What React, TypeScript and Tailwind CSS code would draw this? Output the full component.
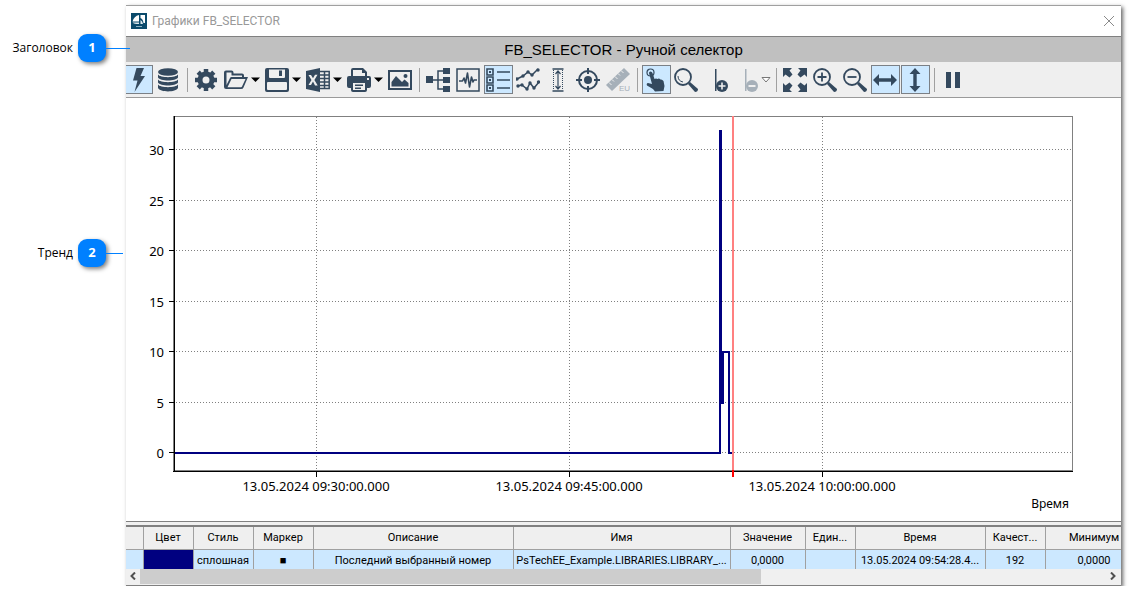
import React from 'react';
import clsx from 'clsx';

const DARK = '#34495e';
const MUTED = '#a6b0b9';

function Icon({ children, muted = false }: { children: React.ReactNode; muted?: boolean }) {
  const color = muted ? MUTED : DARK;
  return (
    <svg viewBox="0 0 24 24" width="24" height="24" fill={color} stroke="none" color={color} className="shrink-0" aria-hidden="true">
      {children}
    </svg>
  );
}

const icons = {
  bolt: (
    <Icon>
      <path d="M9.500 0H17L13.500 8H18L7.500 24L10.500 12.500H6Z" />
    </Icon>
  ),
  database: (
    <Icon>
      <ellipse cx="12" cy="4" rx="10" ry="3.800" />
      <path d="M2 6.500C4 10 20 10 22 6.500V9.500C20 13.500 4 13.500 2 9.500Z" />
      <path d="M2 11.500C4 15 20 15 22 11.500V14.500C20 18.500 4 18.500 2 14.500Z" />
      <path d="M2 16.500C4 20 20 20 22 16.500V20C20 24.500 4 24.500 2 20Z" />
    </Icon>
  ),
  gear: (
    <Icon>
      <circle cx="12" cy="12" r="6" fill="none" stroke="currentColor" strokeWidth="5" />
      <g stroke="currentColor" strokeWidth="4.500">
        <path d="M12 1V5M12 19V23M1 12H5M19 12H23M4.200 4.200L7 7M17 17L19.800 19.800M4.200 19.800L7 17M17 7L19.800 4.200" />
      </g>
    </Icon>
  ),
  folder: (
    <Icon>
      <path fillRule="evenodd" d="M0 4.500Q0 2.500 2 2.500H7.500Q9.500 2.500 9.500 4.500V5.500H18Q20 5.500 20 7.500V9H24L19.500 19.500Q19 21 17 21H2Q0 21 0 19ZM2.500 17L6 10Q6.500 9 7.500 9H18V7.500H8Q7.500 7.500 7.500 7V4.500H2.500Z" />
      <path fill="#efefef" d="M7.500 11H21.500L18 18.500Q17.700 19.200 17 19.200H3.500Z" />
    </Icon>
  ),
  save: (
    <Icon>
      <path fillRule="evenodd" d="M2 0H4V9Q4 10 5 10H19Q20 10 20 9V0H22Q24 0 24 2V22Q24 24 22 24H2Q0 24 0 22V2Q0 0 2 0ZM3 14Q2 14 2 15V21Q2 22 3 22H21Q22 22 22 21V15Q22 14 21 14Z" />
      <path d="M4 0H20V1.500H4ZM14 2.500H17V8H14Z" />
    </Icon>
  ),
  excel: (
    <Icon>
      <path fillRule="evenodd" d="M0 3L14 0V24L0 21ZM2.500 7L5.500 12L2.500 17H5L7 13.500L9 17.500H11.700L8.400 12L11.500 6.700H9L7 10.300L5 7Z" />
      <path fill="none" stroke="currentColor" strokeWidth="1.500" d="M14 3.500H23.200V20.500H14M14 7H23M14 10.500H23M14 14H23M14 17.500H23M18.500 3V20" />
    </Icon>
  ),
  printer: (
    <Icon>
      <path fillRule="evenodd" d="M4 8V2Q4 0 6 0H16L20 4V8H22Q24 8 24 10V18Q24 20 22 20H20V22Q20 24 18 24H6Q4 24 4 22V20H2Q0 20 0 18V10Q0 8 2 8ZM6 2V8H18V5H15V2ZM6 15V22H18V15ZM20 10V12H22V10Z" />
      <path d="M8 16.500H16V18H8ZM8 19.500H14V21H8Z" />
    </Icon>
  ),
  image: (
    <Icon>
      <path fillRule="evenodd" d="M0 2H24V22H0ZM2 4V20H22V4Z" />
      <path d="M3.500 18.500V14L8 8L14 14L16.500 11.500L20.500 15V18.500Z" />
      <circle cx="17.500" cy="8" r="2" />
    </Icon>
  ),
  tree: (
    <Icon>
      <path d="M0 8H7V15H0ZM17 0H24V6H17ZM17 9H24V15H17ZM17 18H24V24H17Z" />
      <path fill="none" stroke="currentColor" strokeWidth="1.500" d="M7 12H18M18 3H12V21H18" />
    </Icon>
  ),
  pulse: (
    <Icon>
      <path fill="none" stroke="currentColor" strokeWidth="1.500" d="M1 1H23V23H1Z" />
      <path fill="none" stroke="currentColor" strokeWidth="1.600" strokeLinejoin="round" d="M3 13H6.500L8 10L9.500 15L11.500 5L13.500 19L15.500 9L17 14L18 12H21" />
    </Icon>
  ),
  legend: (
    <Icon>
      <path fill="none" stroke="currentColor" strokeWidth="1.600" d="M1 1H7V7H1ZM1 9H7V15H1ZM1 17H7V23H1ZM11 4H24M11 12H24M11 20H24" />
      <path d="M3 3H5V5H3ZM3 11H5V13H3ZM3 19H5V21H3Z" />
    </Icon>
  ),
  curves: (
    <Icon>
      <g fill="none" stroke="currentColor" strokeWidth="1.500">
        <path d="M1 11L7 8L12 4L16 7L22 1" />
        <path d="M1 18L6 17L11 21L14 15L18 20L23 14" />
      </g>
      {['1 11', '7 8', '12 4', '16 7', '22 2', '2 18', '6 17', '11 21', '14 15', '18 20', '22.500 14'].map((p) => {
        const [x, y] = p.split(' ');
        return <circle key={p} cx={x} cy={y} r="1.700" />;
      })}
    </Icon>
  ),
  range: (
    <Icon>
      <path fill="none" stroke="currentColor" strokeWidth="1.500" d="M6.500 1H17.500M6.500 23H17.500" />
      <path fill="none" stroke="currentColor" strokeWidth="1" strokeDasharray="1 1" d="M7.500 2V22M16.500 2V22" />
      <path fill="none" stroke="currentColor" strokeWidth="1.200" d="M12 3V21M9.500 6L12 3L14.500 6M9.500 18L12 21L14.500 18" />
    </Icon>
  ),
  target: (
    <Icon>
      <circle cx="12" cy="12" r="9" fill="none" stroke="currentColor" strokeWidth="2" />
      <circle cx="12" cy="12" r="4" />
      <path fill="none" stroke="currentColor" strokeWidth="2" d="M12 0V6M12 18V24M0 12H6M18 12H24" />
    </Icon>
  ),
  ruler: (
    <Icon muted>
      <path d="M18 0L24 6L6 23L0 17Z" />
      <path stroke="#efefef" strokeWidth="1" d="M3 14.500L5.500 17M6 11.500L8 13.500M9 8.500L11.500 11M12 5.500L14 7.500M15 2.500L17.500 5" />
      <text x="13" y="23" fontSize="8" fontFamily="Liberation Sans, sans-serif">EU</text>
    </Icon>
  ),
  hand: (
    <Icon>
      <circle cx="6.500" cy="4.500" r="3.500" fill="none" stroke="currentColor" strokeWidth="1.200" />
      <path d="M5 5Q5 3.500 6.500 3.500Q8 3.500 8.500 5L10.500 11Q12 9.800 13.500 11Q15 10 16.500 11.500Q18 11 19.500 13L20.500 18L19.500 23L11 23.500L9 21L3 17.500Q2 15.500 4 15L8 16Z" />
    </Icon>
  ),
  lens: (
    <Icon>
      <circle cx="9" cy="9" r="8" fill="none" stroke="currentColor" strokeWidth="1.800" />
      <path d="M14 16L16 14L24 21Q24 24 21 24Z" />
      <path fill="none" stroke="currentColor" strokeWidth="1" d="M4 8Q4 13 9 14" />
    </Icon>
  ),
  markerAdd: (
    <Icon>
      <path d="M11 1H12.500V23H11Z" />
      <circle cx="18" cy="18" r="6" />
      <path stroke="#efefef" strokeWidth="1.600" d="M14.500 18H21.500M18 14.500V21.500" />
    </Icon>
  ),
  markerRemove: (
    <Icon muted>
      <path d="M11 1H12.500V23H11Z" />
      <circle cx="18" cy="18" r="6" />
      <path stroke="#efefef" strokeWidth="2" d="M14.500 18H21.500" />
    </Icon>
  ),
  expand: (
    <Icon>
      <path d="M0 0H9L6.500 2.500L9.500 6.500L6.500 9.500L2.500 6.500L0 9ZM24 0V9L21.500 6.500L17.500 9.500L14.500 6.500L17.500 2.500L15 0ZM0 24V15L2.500 17.500L6.500 14.500L9.500 17.500L6.500 21.500L9 24ZM24 24H15L17.500 21.500L14.500 17.500L17.500 14.500L21.500 17.500L24 15Z" />
    </Icon>
  ),
  zoomIn: (
    <Icon>
      <circle cx="9" cy="9" r="8" fill="none" stroke="currentColor" strokeWidth="1.800" />
      <path stroke="currentColor" strokeWidth="1.800" d="M4.500 9H13.500M9 4.500V13.500" />
      <path d="M14 16L16 14L24 21Q24 24 21 24Z" />
    </Icon>
  ),
  zoomOut: (
    <Icon>
      <circle cx="9" cy="9" r="8" fill="none" stroke="currentColor" strokeWidth="1.800" />
      <path stroke="currentColor" strokeWidth="1.800" d="M4.500 9H13.500" />
      <path d="M14 16L16 14L24 21Q24 24 21 24Z" />
    </Icon>
  ),
  horizontal: (
    <Icon>
      <path d="M0 12L6 6V10.300H18V6L24 12L18 18V13.700H6V18Z" />
    </Icon>
  ),
  vertical: (
    <Icon>
      <path d="M12 0L17.500 6H13.700V18H17.500L12 24L6.500 18H10.300V6H6.500Z" />
    </Icon>
  ),
  pause: (
    <Icon>
      <path d="M5 4H10V20H5ZM14 4H19V20H14Z" />
    </Icon>
  ),
};

type Tool = { icon: keyof typeof icons; label: string; active?: boolean; menu?: 'solid' | 'outline' };

const toolGroups: Tool[][] = [
  [
    { icon: 'bolt', label: 'Онлайн', active: true },
    { icon: 'database', label: 'История' },
  ],
  [
    { icon: 'gear', label: 'Настройки' },
    { icon: 'folder', label: 'Открыть', menu: 'solid' },
    { icon: 'save', label: 'Сохранить', menu: 'solid' },
    { icon: 'excel', label: 'Экспорт', menu: 'solid' },
    { icon: 'printer', label: 'Печать', menu: 'solid' },
    { icon: 'image', label: 'Изображение' },
  ],
  [
    { icon: 'tree', label: 'Дерево' },
    { icon: 'pulse', label: 'Сигнал' },
    { icon: 'legend', label: 'Легенда', active: true },
    { icon: 'curves', label: 'Кривые' },
    { icon: 'range', label: 'Диапазон' },
    { icon: 'target', label: 'Центрировать' },
    { icon: 'ruler', label: 'Единицы' },
  ],
  [
    { icon: 'hand', label: 'Перемещение', active: true },
    { icon: 'lens', label: 'Лупа' },
    { icon: 'markerAdd', label: 'Добавить маркер' },
    { icon: 'markerRemove', label: 'Удалить маркер', menu: 'outline' },
  ],
  [
    { icon: 'expand', label: 'Показать всё' },
    { icon: 'zoomIn', label: 'Увеличить' },
    { icon: 'zoomOut', label: 'Уменьшить' },
    { icon: 'horizontal', label: 'По горизонтали', active: true },
    { icon: 'vertical', label: 'По вертикали', active: true },
  ],
  [{ icon: 'pause', label: 'Пауза' }],
];

function ToolButton({ icon, label, active, menu }: Tool) {
  return (
    <button
      type="button"
      aria-label={label}
      className={clsx(
        'flex h-[29px] shrink-0 items-center',
        menu ? 'w-[40px] gap-[3px] pl-[2px]' : 'justify-center pr-px',
        !menu && (icon === 'bolt' ? 'w-[27px]' : 'w-[29px]'),
        active && 'border border-[#7b8086] bg-[#cce8ff]',
        icon === 'bolt' && 'border-l-0',
      )}
    >
      {icons[icon]}
      {menu && (
        <svg width="10" height="6" viewBox="0 0 10 6" className="shrink-0" aria-hidden="true">
          <path
            d={menu === 'solid' ? 'M0 0.500H9L4.500 5Z' : 'M1 0.500H9L5 5Z'}
            fill={menu === 'solid' ? '#000' : '#fff'}
            stroke={menu === 'solid' ? 'none' : '#777'}
          />
        </svg>
      )}
    </button>
  );
}

function Toolbar() {
  return (
    <div className="flex gap-px overflow-hidden border-b border-[#9a9a9a] bg-[#efefef] py-[3px]">
      {toolGroups.map((group, i) => (
        <React.Fragment key={i}>
          {i > 0 && (
            <div className="flex w-[7px] shrink-0 items-center justify-center">
              <div className="h-6 w-px bg-[#a0a0a0]" />
            </div>
          )}
          {group.map((tool) => (
            <ToolButton key={tool.icon} {...tool} />
          ))}
        </React.Fragment>
      ))}
    </div>
  );
}

const yTicks = [
  { value: 30, y: 52 },
  { value: 25, y: 103 },
  { value: 20, y: 153 },
  { value: 15, y: 204 },
  { value: 10, y: 254 },
  { value: 5, y: 305 },
  { value: 0, y: 355 },
];

const xTicks = [
  { label: '13.05.2024 09:30:00.000', x: 190 },
  { label: '13.05.2024 09:45:00.000', x: 443 },
  { label: '13.05.2024 10:00:00.000', x: 696 },
];

function TrendChart() {
  return (
    <svg viewBox="0 0 995 423" className="block w-full font-['Noto_Sans','Open_Sans',sans-serif] text-[13px]" role="img" aria-label="Тренд">
      <g shapeRendering="crispEdges" fill="none">
        <path d="M48 18.500H946.500V372" stroke="#808080" />
        <g stroke="#808080" strokeDasharray="1 2">
          {yTicks.map((t) => (
            <path key={t.value} d={`M50 ${t.y - 0.5}H946`} />
          ))}
          {xTicks.map((t) => (
            <path key={t.x} d={`M${t.x + 0.5} 19V372`} />
          ))}
        </g>
        <path d="M48.500 18V374" stroke="#000" />
        <path d="M47.500 18V374" stroke="#808080" />
        <path d="M47 373.500H947" stroke="#000" />
        <path d="M49 372.500H947" stroke="#808080" />
        <g stroke="#000">
          {yTicks.map((t) => (
            <path key={t.value} d={`M43 ${t.y - 0.5}H48`} />
          ))}
          {xTicks.map((t) => (
            <path key={t.x} d={`M${t.x + 0.5} 374V379`} />
          ))}
        </g>
        <path d="M49 355H594V33H595V305H597V254H603V355H608" stroke="#000080" strokeWidth="2" />
        <path d="M607 18V372" stroke="#ff8080" strokeWidth="2" />
        <path d="M607 372V379" stroke="#f00" strokeWidth="2" />
      </g>
      <g fill="#000">
        {yTicks.map((t) => (
          <text key={t.value} x="38" y={t.y + 5} textAnchor="end">
            {t.value}
          </text>
        ))}
        {xTicks.map((t) => (
          <text key={t.x} x={t.x} y="393" textAnchor="middle">
            {t.label}
          </text>
        ))}
        <text x="943" y="410" textAnchor="end" fontSize="12">
          Время
        </text>
      </g>
    </svg>
  );
}

const columns = [
  { title: '', value: '', width: 'w-[17px]' },
  { title: 'Цвет', value: '', width: 'w-[50px]', swatch: true },
  { title: 'Стиль', value: 'сплошная', width: 'w-[60px]' },
  { title: 'Маркер', value: '■', width: 'w-[60px]' },
  { title: 'Описание', value: 'Последний выбранный номер', width: 'w-[200px]' },
  { title: 'Имя', value: 'PsTechEE_Example.LIBRARIES.LIBRARY_...', width: 'w-[217px]' },
  { title: 'Значение', value: '0,0000', width: 'w-[75px]' },
  { title: 'Един...', value: '', width: 'w-[50px]' },
  { title: 'Время', value: '13.05.2024 09:54:28.4...', width: 'w-[130px]' },
  { title: 'Качест...', value: '192', width: 'w-[60px]' },
  { title: 'Минимум', value: '0,0000', width: 'w-[98px]' },
];

function SignalTable() {
  return (
    <div className="overflow-hidden border-t-2 border-[#808080] bg-[#efefef]">
      <table className="w-[1017px] table-fixed border-collapse text-center font-['Roboto','Noto_Sans',sans-serif] text-[11px] leading-4 text-black">
        <thead>
          <tr className="h-[22px]">
            {columns.map((c, i) => (
              <th key={i} className={clsx('overflow-hidden border-r border-b border-[#a0a0a0] p-0 pt-px font-normal whitespace-nowrap', c.width)}>
                {c.title}
              </th>
            ))}
          </tr>
        </thead>
        <tbody>
          <tr className="h-[19px] bg-[#cce8ff]">
            {columns.map((c, i) => (
              <td
                key={i}
                className={clsx('overflow-hidden border-r border-[#a0a0a0] p-0 pt-[3px] whitespace-nowrap', c.swatch && 'bg-[#000080]')}
              >
                {c.value}
              </td>
            ))}
          </tr>
        </tbody>
      </table>
    </div>
  );
}

function ScrollBar() {
  return (
    <div className="flex h-[15px] bg-[#f0f0f0]">
      <button type="button" aria-label="Влево" className="flex w-[14px] items-center justify-center">
        <svg width="6" height="8" viewBox="0 0 6 8" fill="none" stroke="#505050" strokeWidth="2">
          <path d="M5 0.500L1.500 4L5 7.500" />
        </svg>
      </button>
      <div className="flex-1">
        <div className="h-full w-[64.4%] bg-[#cdcdcd]" />
      </div>
      <button type="button" aria-label="Вправо" className="flex w-[17px] items-center justify-center">
        <svg width="6" height="8" viewBox="0 0 6 8" fill="none" stroke="#505050" strokeWidth="2">
          <path d="M1 0.500L4.500 4L1 7.500" />
        </svg>
      </button>
    </div>
  );
}

function Callout({ label, number, line }: { label: string; number: number; line: string }) {
  return (
    <div className="flex h-7 items-center pl-2">
      <span className="flex-1 pr-[5px] text-right text-[12px] leading-4 text-black">{label}</span>
      <span className="flex size-7 shrink-0 items-center justify-center rounded-[9px] bg-[#0080ff] text-[13px] font-bold text-white shadow-[2px_2px_4px_rgba(0,0,0,0.5)]">
        {number}
      </span>
      <span className={clsx('z-10 h-px shrink-0 bg-[#0080ff]', line)} />
    </div>
  );
}

function TitleBar() {
  return (
    <div className="flex h-[30px] items-center gap-[5px] pr-[6px] pl-[5px]">
      <svg width="16" height="16" viewBox="0 0 16 16" aria-hidden="true">
        <rect width="16" height="16" fill="#0b4a6b" />
        <path d="M1.500 8.500Q3 3 8 2V8.500ZM9.500 2H14V10H12.500Q12 6 9.500 5Z" fill="#fff" />
        <path d="M1.500 9.500H8V11Q3 11 1.500 9.500ZM9.500 7V11H12Q11.500 8 9.500 7Z" fill="#dfe9ee" />
        <path d="M5 13.500H11" stroke="#8fb3c4" />
      </svg>
      <span className="flex-1 font-['Roboto','Open_Sans',sans-serif] text-[12px] leading-4 text-[#999]">Графики FB_SELECTOR</span>
      <button type="button" aria-label="Закрыть" className="flex items-center">
        <svg width="12" height="12" viewBox="0 0 12 12" stroke="#8a8a8a" fill="none">
          <path d="M1 1L11 11M11 1L1 11" />
        </svg>
      </button>
    </div>
  );
}

export default function App() {
  return (
    <div className="flex bg-white pt-[5px] pr-[9px] font-['Open_Sans','Noto_Sans',sans-serif]">
      <aside className="flex w-[126px] shrink-0 flex-col gap-[177px] pt-[29px]">
        <Callout label="Заголовок" number={1} line="-mr-1 w-6" />
        <Callout label="Тренд" number={2} line="mr-[3px] w-[17px]" />
      </aside>
      <main className="min-w-0 flex-1 border-t border-[#a0a0a0] bg-white shadow-[2px_2px_4px_rgba(0,0,0,0.6)]">
        <TitleBar />
        <h1 className="border-t border-[#808080] bg-[#c0c0c0] text-center font-['Liberation_Sans',Arial,sans-serif] text-[15px] leading-[25px] text-black">
          FB_SELECTOR - Ручной селектор
        </h1>
        <Toolbar />
        <TrendChart />
        <div className="h-1 border-t border-[#808080] bg-[#f0f0f0]" />
        <SignalTable />
        <ScrollBar />
        <div className="h-[2px] border-b border-[#808080] bg-[#f0f0f0]" />
      </main>
    </div>
  );
}
